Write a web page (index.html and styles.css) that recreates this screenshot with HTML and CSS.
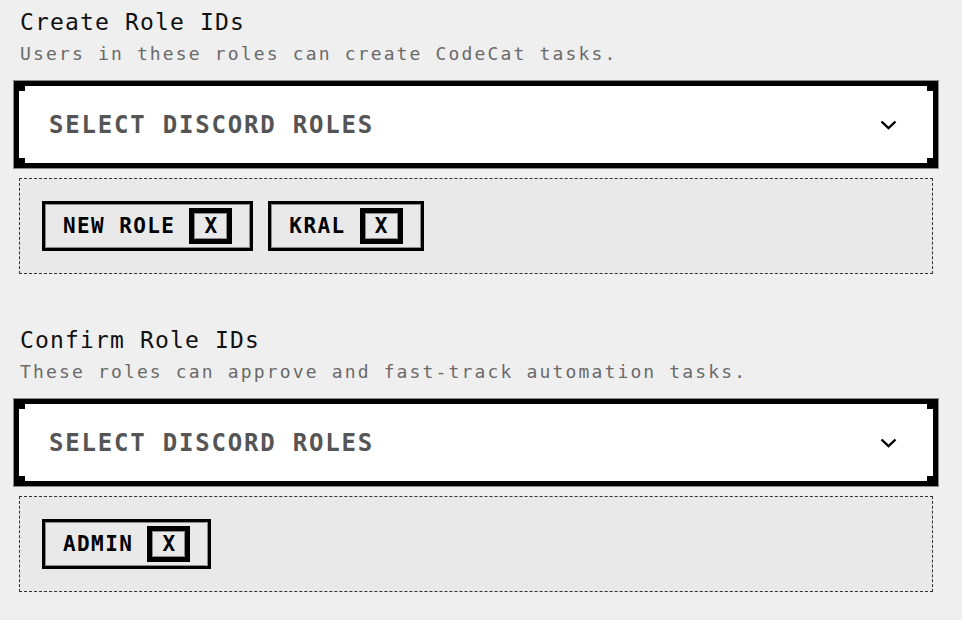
FILE: index.html
```html
<!DOCTYPE html>
<html lang="en">
<head>
<meta charset="utf-8">
<title>Role settings</title>
<link rel="stylesheet" href="styles.css">
</head>
<body>
  <section class="field">
    <h2 class="field-title">Create Role IDs</h2>
    <p class="field-desc">Users in these roles can create CodeCat tasks.</p>
    <div class="select">
      <span class="select-label">SELECT DISCORD ROLES</span>
      <svg class="chevron" width="17" height="10" viewBox="0 0 17 10"><polyline points="1.5,1.5 8.5,8.2 15.5,1.5" fill="none" stroke="#000" stroke-width="2.4"/></svg>
    </div>
    <div class="chips">
      <div class="chip"><span class="chip-label">NEW ROLE</span><span class="chip-x">X</span></div>
      <div class="chip"><span class="chip-label">KRAL</span><span class="chip-x">X</span></div>
    </div>
  </section>
  <section class="field field-second">
    <h2 class="field-title">Confirm Role IDs</h2>
    <p class="field-desc">These roles can approve and fast-track automation tasks.</p>
    <div class="select">
      <span class="select-label">SELECT DISCORD ROLES</span>
      <svg class="chevron" width="17" height="10" viewBox="0 0 17 10"><polyline points="1.5,1.5 8.5,8.2 15.5,1.5" fill="none" stroke="#000" stroke-width="2.4"/></svg>
    </div>
    <div class="chips">
      <div class="chip"><span class="chip-label">ADMIN</span><span class="chip-x">X</span></div>
    </div>
  </section>
</body>
</html>
```

FILE: styles.css
```css
html, body {
  margin: 0;
  background: #efefef;
}
body {
  padding: 0 29px 0 19px;
  font-family: "DejaVu Sans Mono", "Liberation Mono", monospace;
  color: #111;
}
.field {
  display: flex;
  flex-direction: column;
}
.field-second {
  margin-top: 44px;
}
.field-title {
  margin: 8px 0 0 1px;
  font-size: 23px;
  line-height: 28px;
  font-weight: normal;
  letter-spacing: 1.15px;
  color: #111;
}
.field-desc {
  margin: 6px 0 0 1px;
  font-size: 18px;
  line-height: 24px;
  letter-spacing: 2.15px;
  color: #6a6a6a;
}
.select {
  margin: 15px -5px 0 -5px;
  height: 87px;
  box-sizing: border-box;
  border: 5px solid #000;
  box-shadow: 0 0 0 1px #8c8c8c;
  background:
    linear-gradient(#000, #000) left top / 6px 5px no-repeat,
    linear-gradient(#000, #000) right top / 6px 5px no-repeat,
    linear-gradient(#000, #000) left bottom / 6px 5px no-repeat,
    linear-gradient(#000, #000) right bottom / 6px 5px no-repeat,
    #fff;
  background-origin: padding-box;
  display: flex;
  align-items: center;
  justify-content: space-between;
  padding: 0 36px 0 30px;
}
.select-label {
  font-size: 24px;
  font-weight: bold;
  letter-spacing: 1.8px;
  color: #555;
}
.chevron {
  display: block;
}
.chips {
  margin-top: 10px;
  border: 1px dashed #333;
  background: #e9e9e9;
  padding: 22px;
  display: flex;
  gap: 15px;
  flex-wrap: wrap;
}
.chip {
  display: flex;
  align-items: center;
  height: 50px;
  box-sizing: border-box;
  border: 3px solid #000;
  box-shadow: inset 0 0 0 1px #8c8c8c;
  padding: 0 18px 0 18px;
  gap: 14px;
}
.chip-label {
  font-size: 21px;
  font-weight: bold;
  letter-spacing: 1.4px;
  color: #000;
}
.chip-x {
  width: 43px;
  height: 36px;
  box-sizing: border-box;
  border: 5px solid #000;
  box-shadow: inset 0 0 0 1px #8c8c8c;
  display: flex;
  align-items: center;
  justify-content: center;
  font-size: 21px;
  font-weight: bold;
  color: #000;
}
```
